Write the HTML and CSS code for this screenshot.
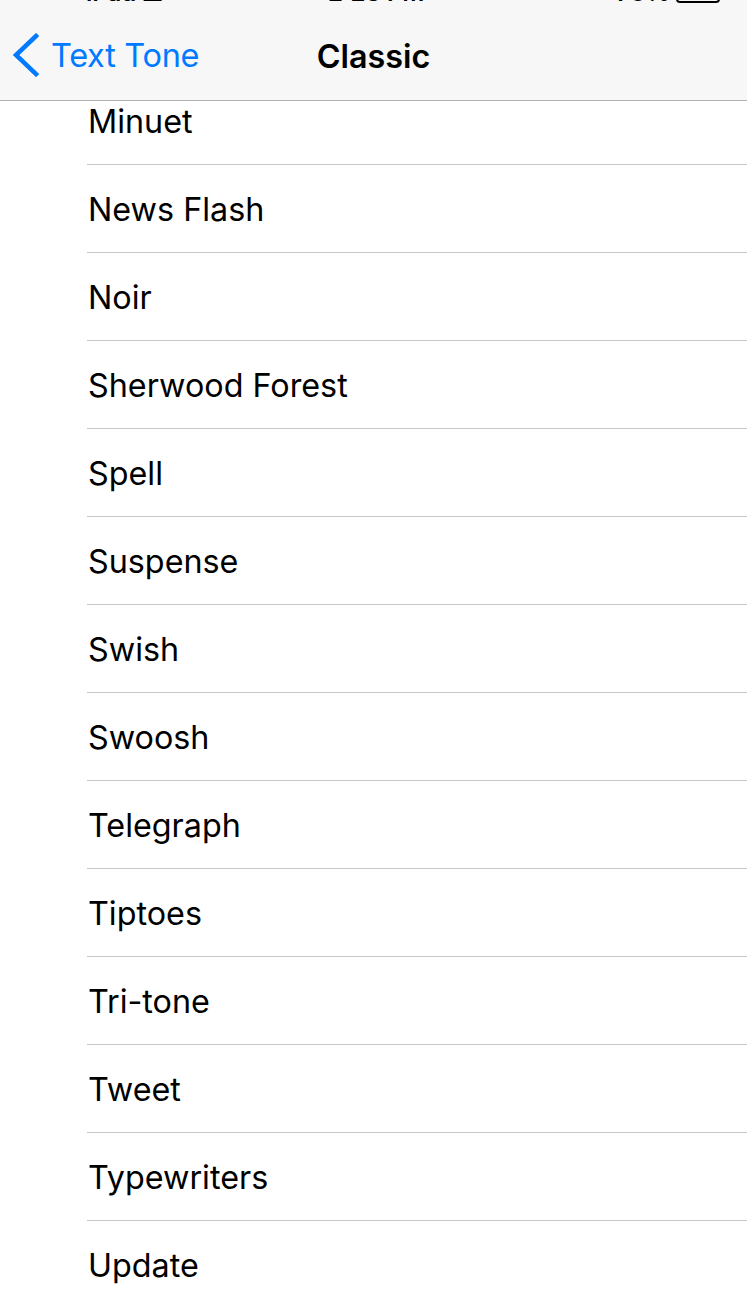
FILE: index.html
```html
<!DOCTYPE html>
<html lang="en">
<head>
<meta charset="utf-8">
<title>Classic</title>
<link rel="stylesheet" href="styles.css">
</head>
<body>
<header class="header">
  <div class="status">
    <div class="status-row">
      <span class="status-left">iPad <span class="wifi">&#9650;</span></span>
      <span class="status-center">2:23 PM</span>
      <span class="status-right">70% <span class="battery"><span class="battery-fill"></span></span><span class="battery-cap"></span></span>
    </div>
  </div>
  <nav class="navbar">
    <a class="back" href="#">
      <svg class="chevron" width="30" height="44" viewBox="0 0 30 44" aria-hidden="true">
        <polyline points="24,3 4,22 24,41" fill="none" stroke="#007aff" stroke-width="4.5" stroke-linecap="square" stroke-linejoin="miter"/>
      </svg>
      <span class="back-label">Text Tone</span>
    </a>
    <h1 class="title">Classic</h1>
  </nav>
</header>
<main class="list-wrap">
  <ul class="list">
    <li class="row">Minuet</li>
    <li class="row">News Flash</li>
    <li class="row">Noir</li>
    <li class="row">Sherwood Forest</li>
    <li class="row">Spell</li>
    <li class="row">Suspense</li>
    <li class="row">Swish</li>
    <li class="row">Swoosh</li>
    <li class="row">Telegraph</li>
    <li class="row">Tiptoes</li>
    <li class="row">Tri-tone</li>
    <li class="row">Tweet</li>
    <li class="row">Typewriters</li>
    <li class="row">Update</li>
  </ul>
</main>
</body>
</html>
```
FILE: styles.css
```css
* { box-sizing: border-box; }
html, body {
  margin: 0;
  padding: 0;
  background: #ffffff;
  height: 100%;
  overflow: hidden;
}
body {
  font-family: Inter, "Liberation Sans", Arial, sans-serif;
  color: #000;
  width: 747px;
  height: 1306px;
  display: flex;
  flex-direction: column;
}
.header {
  background: #f7f7f7;
  border-bottom: 1px solid #b2b2b2;
  height: 101px;
  flex: none;
  display: flex;
  flex-direction: column;
}
.status {
  height: 4px;
  overflow: hidden;
  flex: none;
}
.status-row {
  margin-top: -19px;
  height: 24px;
  line-height: 24px;
  font-size: 24px;
  font-weight: 600;
  display: flex;
  padding: 0 22px 0 86px;
}
.status-left { width: 242px; }
.status-center { flex: 1; }
.status-right { display: flex; align-items: flex-end; }
.wifi { font-size: 20px; }
.battery {
  display: inline-block;
  width: 44px;
  height: 20px;
  border: 2px solid #000;
  border-radius: 4px;
  margin-left: 6px;
  margin-bottom: 2px;
}
.battery-cap {
  display: inline-block;
  width: 3px;
  height: 8px;
  background: #000;
  margin-left: 2px;
  margin-bottom: 7px;
}
.navbar {
  flex: 1;
  display: flex;
  align-items: center;
  position: relative;
}
.back {
  display: flex;
  align-items: center;
  text-decoration: none;
  color: #007aff;
  margin-left: 12px;
  margin-top: 6px;
}
.chevron { display: block; margin-right: 9px; }
.back-label {
  font-size: 32.5px;
  letter-spacing: -0.3px;
}
.title {
  position: absolute;
  left: 0;
  right: 0;
  top: 0;
  bottom: 0;
  margin: 0;
  display: flex;
  align-items: center;
  justify-content: center;
  font-size: 32.3px;
  font-weight: 600;
  padding-top: 9px;
  pointer-events: none;
}
.list-wrap {
  flex: 1;
  overflow: hidden;
}
.list {
  list-style: none;
  margin: -24px 0 0 0;
  padding: 0 0 0 87px;
}
.row {
  height: 88px;
  border-bottom: 1px solid #c8c7cc;
  display: flex;
  align-items: center;
  font-size: 32.3px;
  padding-left: 1px;
  padding-top: 2px;
}
```
